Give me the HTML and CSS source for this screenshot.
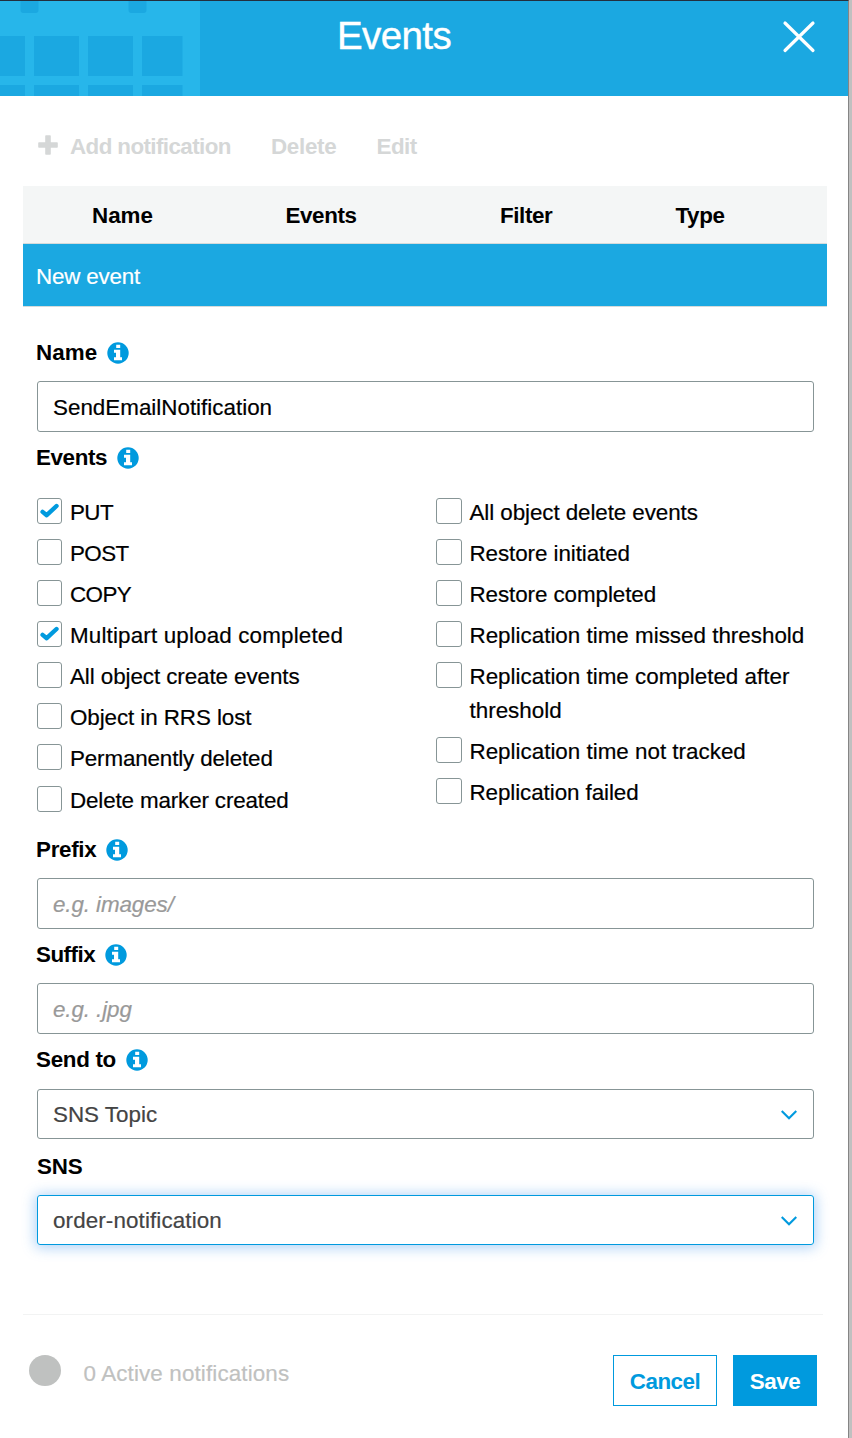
FILE: index.html
```html
<!DOCTYPE html>
<html lang="en">
<head>
<meta charset="utf-8">
<title>Events</title>
<link rel="stylesheet" href="styles.css">
</head>
<body>
<svg class="defs" width="0" height="0" aria-hidden="true">
  <symbol id="info" viewBox="0 0 22 22">
    <circle cx="11" cy="11" r="10.7" fill="#009ade"/>
    <path fill="#fff" d="M9.200 2.800h4v3.200h-4zM7 7.800h6.200v7.500H15V18.300H7v-3h2v-4.500H7z"/>
  </symbol>
  <symbol id="check" viewBox="0 0 19 15">
    <path d="M2.600 8.900L6.700 12.200L16.500 3" fill="none" stroke="#009ade" stroke-width="4.400" stroke-linecap="round" stroke-linejoin="round"/>
  </symbol>
  <symbol id="chevron" viewBox="0 0 16 10">
    <path d="M.7 1L8 8.200L15.300 1" fill="none" stroke="#009ade" stroke-width="2.200"/>
  </symbol>
</svg>
<main class="panel">
  <header class="header">
    <svg class="calendar" width="201" height="95" viewBox="0 0 201 95" aria-hidden="true">
      <path fill="#27b6ea" d="M0 0h200v95H0z"/>
      <g fill="#1ba8e1">
        <path d="M20.500 0h18v9a3 3 0 0 1-3 3h-12a3 3 0 0 1-3-3zM128.500 0h18v9a3 3 0 0 1-3 3h-12a3 3 0 0 1-3-3z"/>
        <path d="M0 35h25v40H0zM34 35h45v40H34zM88 35h45v40H88zM142 35h40.500v40H142zM0 84h25v11H0zM34 84h45v11H34zM88 84h45v11H88zM142 84h40.500v11H142z"/>
      </g>
    </svg>
    <h1 class="title">Events</h1>
    <svg class="close" width="34" height="34" viewBox="0 0 34 34"><path d="M3 3L31 30.500M31 3L3 30.500" stroke="#fff" stroke-width="3.200" stroke-linecap="round"/></svg>
  </header>
  <nav class="toolbar">
    <span class="tool tool-add"><svg class="plus" width="20" height="20" viewBox="0 0 20 20"><path fill="#d5d7d7" d="M8 .2h4a.8.8 0 0 1 .8.800V7.200H19a.8.8 0 0 1 .8.800v4a.8.8 0 0 1-.8.800h-6.200V19a.8.8 0 0 1-.8.800H8a.8.8 0 0 1-.8-.8v-6.200H1A.8.8 0 0 1 .2 12V8A.8.8 0 0 1 1 7.200h6.200V1A.8.8 0 0 1 8 .2z"/></svg>Add notification</span>
    <span class="tool tool-delete">Delete</span>
    <span class="tool tool-edit">Edit</span>
  </nav>
  <section class="table">
    <div class="thead"><span class="th-name">Name</span><span>Events</span><span>Filter</span><span>Type</span></div>
    <div class="trow">New event</div>
  </section>
  <form class="form">
    <div class="label l-name">Name<svg class="info"><use href="#info"/></svg></div>
    <div class="input">SendEmailNotification</div>
    <div class="label l-events">Events<svg class="info"><use href="#info"/></svg></div>
    <div class="options">
      <div class="col">
        <div class="option"><span class="box"><svg class="check"><use href="#check"/></svg></span><span class="caps">PUT</span></div>
        <div class="option"><span class="box"></span><span class="caps">POST</span></div>
        <div class="option"><span class="box"></span><span class="caps">COPY</span></div>
        <div class="option"><span class="box"><svg class="check"><use href="#check"/></svg></span><span class="wide">Multipart upload completed</span></div>
        <div class="option"><span class="box"></span><span>All object create events</span></div>
        <div class="option"><span class="box"></span><span>Object in RRS lost</span></div>
        <div class="option"><span class="box"></span><span class="tight">Permanently deleted</span></div>
        <div class="option"><span class="box"></span><span class="tight">Delete marker created</span></div>
      </div>
      <div class="col">
        <div class="option"><span class="box"></span><span>All object delete events</span></div>
        <div class="option"><span class="box"></span><span>Restore initiated</span></div>
        <div class="option"><span class="box"></span><span>Restore completed</span></div>
        <div class="option"><span class="box"></span><span class="even">Replication time missed threshold</span></div>
        <div class="option tall"><span class="box"></span><span class="even">Replication time completed after<br>threshold</span></div>
        <div class="option"><span class="box"></span><span class="even">Replication time not tracked</span></div>
        <div class="option"><span class="box"></span><span>Replication failed</span></div>
      </div>
    </div>
    <div class="label l-prefix">Prefix<svg class="info"><use href="#info"/></svg></div>
    <div class="input hint">e.g. images/</div>
    <div class="label l-suffix">Suffix<svg class="info"><use href="#info"/></svg></div>
    <div class="input hint">e.g. .jpg</div>
    <div class="label l-send">Send to<svg class="info"><use href="#info"/></svg></div>
    <div class="input select"><span>SNS Topic</span><svg class="chevron"><use href="#chevron"/></svg></div>
    <div class="label l-sns">SNS</div>
    <div class="input select focused"><span>order-notification</span><svg class="chevron"><use href="#chevron"/></svg></div>
  </form>
  <footer class="footer">
    <span class="dot"></span>
    <span class="status">0 Active notifications</span>
    <span class="btn cancel">Cancel</span>
    <span class="btn save">Save</span>
  </footer>
</main>
</body>
</html>
```
FILE: styles.css
```css
* { box-sizing: border-box; }
body {
  margin: 0;
  background: #c0c0c0;
  font: 22.4px/34px "Liberation Sans", Arial, sans-serif;
  color: #000;
  -webkit-text-stroke: 0.2px;
}
.defs { display: block; height: 0; }
.panel {
  width: 849px;
  height: 1438px;
  background: #fff;
  border-top: 1px solid #232f3e;
  border-right: 1px solid #858585;
  display: flex;
  flex-direction: column;
  overflow: hidden;
}
.header {
  height: 95px;
  flex: none;
  background: #1ba8e1;
  display: flex;
  align-items: flex-start;
}
.calendar { flex: none; }
.title {
  margin: 12px 0 0 136px;
  width: 445px;
  font-size: 38.500px;
  line-height: 46px;
  font-weight: 400;
  letter-spacing: -0.6px;
  color: #fff;
  -webkit-text-stroke: 0.4px;
}
.close { margin-top: 19px; }
.toolbar {
  height: 90px;
  flex: none;
  padding: 34px 0 0 38px;
  display: flex;
  font-weight: 700;
  color: #d5d7d7;
  -webkit-text-stroke: 0;
}
.tool { display: flex; }
.tool-add { width: 233px; letter-spacing: -0.6px; }
.tool-delete { width: 105.5px; letter-spacing: -0.3px; }
.tool-edit { letter-spacing: -0.5px; }
.plus { margin: 5px 12px 0 0; }
.table { width: 804px; margin-left: 23px; flex: none; }
.thead {
  height: 58px;
  padding-left: 69px;
  display: grid;
  grid-template-columns: 193.500px 214.5px 175.5px 1fr;
  background: #f4f6f6;
  border-bottom: 1px solid #d5dbdb;
  font-weight: 700;
  line-height: 59px;
  letter-spacing: -0.4px;
  -webkit-text-stroke: 0;
}
.th-name { letter-spacing: 0; }
.trow {
  height: 63px;
  padding-left: 13px;
  line-height: 65px;
  background: #1ba8e1;
  background-clip: padding-box;
  border-bottom: 1px solid #d5dbdb;
  color: #fff;
  letter-spacing: -0.2px;
}
.form { padding: 20px 34px 0 37px; width: 848px; flex: none; }
.label {
  height: 54px;
  line-height: 51px;
  margin-left: -1px;
  display: flex;
  font-weight: 700;
  letter-spacing: -0.2px;
  -webkit-text-stroke: 0;
}
.info { width: 22px; height: 22px; margin: 15px 0 0 10px; }
.input {
  height: 51px;
  padding-left: 15px;
  line-height: 51px;
  border: 1px solid #879596;
  border-radius: 3px;
}
.hint { color: #999; font-style: italic; letter-spacing: -0.1px; }
.select {
  height: 50px;
  line-height: 49px;
  color: #444;
  display: flex;
  justify-content: space-between;
  padding-right: 16px;
}
.chevron { width: 16px; height: 10px; margin-top: 20px; }
.focused {
  border-color: #009ade;
  box-shadow: 0 1px 13px 2px rgba(60, 145, 235, 0.4);
  letter-spacing: 0.12px;
}
.l-name { letter-spacing: 0.05px; }
.l-events { height: 66px; letter-spacing: -0.4px; }
.l-prefix { letter-spacing: -0.3px; }
.l-suffix { letter-spacing: -0.5px; }
.l-send { height: 55px; letter-spacing: -0.3px; }
.l-sns { height: 56px; line-height: 55px; margin-left: 0; }
.options {
  display: grid;
  grid-template-columns: 399px 1fr;
  height: 326px;
}
.option {
  display: flex;
  height: 41.08px;
  gap: 8px;
  white-space: nowrap;
  letter-spacing: -0.08px;
}
.tall { height: 75px; }
.box {
  width: 25px;
  height: 26px;
  border: 1px solid #879596;
  border-radius: 3px;
  flex: none;
}
.col:last-child .option { gap: 7.500px; }
.col:last-child .box { width: 26px; }
.option span:last-child { margin-top: -2px; }
.caps { letter-spacing: -0.6px; }
.wide { letter-spacing: 0.16px; }
.even { letter-spacing: 0; }
.tight { letter-spacing: -0.14px; }
.check { display: block; width: 19px; height: 15px; margin: 4px 0 0 1.500px; }
.footer {
  width: 800px;
  margin: 69px 0 0 23px;
  padding: 40px 6px 0 6px;
  border-top: 1px solid #f2f3f3;
  display: flex;
  align-items: flex-start;
}
.dot {
  width: 32px;
  height: 31px;
  border-radius: 50%;
  background: #bfc1c0;
  margin-right: 22.500px;
}
.status { color: #bfc1c0; width: 529.5px; line-height: 37px; letter-spacing: 0.13px; }
.btn {
  height: 51px;
  line-height: 51px;
  font-weight: 700;
  text-align: center;
  border: 1px solid #009ade;
  color: #009ade;
  flex: none;
  letter-spacing: -0.5px;
  -webkit-text-stroke: 0;
}
.cancel { width: 104px; margin-right: 16px; }
.save { width: 84px; background: #009ade; color: #fff; }
```
